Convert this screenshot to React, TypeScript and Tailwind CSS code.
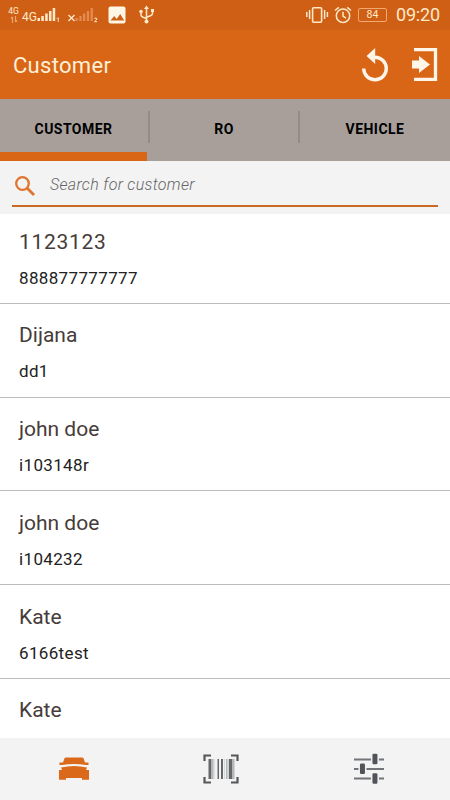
const customers = [
  { name: "1123123", code: "888877777777" },
  { name: "Dijana", code: "dd1" },
  { name: "john doe", code: "i103148r" },
  { name: "john doe", code: "i104232" },
  { name: "Kate", code: "6166test" },
  { name: "Kate", code: "" },
];

const StatusBar = () => {
  return (
    <div className="h-[30px] shrink-0 bg-[#ce5f15] flex items-center justify-between text-[#ffe9c9]">
      {/* Network */}
      <div className="flex items-center h-full pl-[7px]">
        <div className="w-[13px] flex flex-col items-center">
          <span className="text-[8.5px] leading-[9px]">4G</span>
          <svg width="8" height="8" viewBox="0 0 8 8" fill="none" stroke="#eda36c" strokeWidth="1.2">
            <path d="M2.5 7V1M1 2.5L2.5 1M5.5 0V6M7 4.5L5.5 6" />
          </svg>
        </div>
        <span className="ml-[2px] mt-[4px] w-[15px] text-[12px] leading-[12px]">4G</span>
        <svg width="24" height="16" viewBox="0 0 24 16" fill="currentColor">
          <path d="M.5 11h2.500v3H.5zM4.300 9h2.500v5H4.300zM8.200 6.500h2.500V14H8.200zM12 4h2.500v10H12zM15.700 1h2.500v13h-2.500z" />
          <path d="M19.500 11.500l1.500-1h.8V15h-1v-3.400l-1.300.7z" opacity=".9" />
        </svg>
        <svg className="ml-[5px]" width="33" height="16" viewBox="0 0 33 16">
          <path d="M2.500 8l6 6M8.500 8l-6 6" stroke="currentColor" strokeWidth="1.400" />
          <path d="M9.500 11h2.300v3H9.500zM13.300 9h2.300v5h-2.300zM17 6.500h2.300V14H17zM20.800 4h2.300v10h-2.300zM24.600 1h2.300v13h-2.300z" fill="#e58b50" />
          <path d="M28.500 12q0-1 1.200-1t1.200 1q0 .8-2.400 2.700h2.600" fill="none" stroke="currentColor" strokeWidth="1" />
        </svg>
        <svg className="ml-[9px]" width="18" height="18" viewBox="0 0 18 18">
          <rect x=".5" y=".5" width="17" height="17" rx="2" fill="#fff6e6" />
          <path d="M2.500 14.500l3.700-4.500 2.500 3 3.500-5 4 6.500z" fill="#ce5f15" />
        </svg>
        <svg className="ml-[12px]" width="18" height="20" viewBox="0 0 18 20" fill="none" stroke="currentColor" strokeWidth="1.500">
          <path d="M8.500 3v13M3 7v3q0 1.500 2 2.200l3.500 1.300M14.500 6v2.500q0 1.500-2 2.200l-4 1.500" />
          <path d="M6 4L8.500.5 11 4zM13 4h3v3h-3z" fill="currentColor" stroke="none" />
          <circle cx="3" cy="6.500" r="1.800" fill="currentColor" stroke="none" />
          <circle cx="8.500" cy="16.500" r="2" fill="currentColor" stroke="none" />
        </svg>
      </div>

      {/* Alarm, battery, clock */}
      <div className="flex items-center h-full pr-[10px]">
        <svg width="24" height="18" viewBox="0 0 24 18" fill="none" stroke="currentColor">
          <rect x="6.600" y="1.700" width="9" height="14.600" rx="1" strokeWidth="1.600" />
          <path d="M.8 6v5M3.600 4v9M18.600 4v9M21.400 6v5" strokeWidth="1.500" />
        </svg>
        <svg className="ml-[4px]" width="18" height="18" viewBox="0 0 18 18" fill="none" stroke="currentColor" strokeWidth="1.500">
          <circle cx="9" cy="9.800" r="6.700" />
          <path d="M9 5.800v4.200l3 2.200M1 4.500L4.800 1.400M17 4.500l-3.800-3.100" />
        </svg>
        <div className="ml-[6px] w-[29px] h-[14px] rounded-[2px] border border-[#f3a771] flex items-center justify-center pt-px text-[10.5px] leading-none">
          84
        </div>
        <span className="ml-[9px] w-[44px] text-[18px] leading-[20px] tracking-[-0.2px] whitespace-nowrap">09:20</span>
      </div>
    </div>
  );
};

const Header = () => {
  return (
    <div className="h-[69px] shrink-0 bg-[#d96617] flex items-center justify-between pl-[13px] pr-[12px]">
      <h1 className="mt-[2px] text-[22px] leading-[26px] tracking-[0.3px] text-[#fff0d8]">Customer</h1>
      <div className="flex items-center gap-[22px]">
        <svg width="28" height="36" viewBox="0 0 28 36">
          <path d="M2.700 21.500A11.300 11.300 0 1 0 14 10.200H12" fill="none" stroke="#fff5e8" strokeWidth="3.400" />
          <path d="M5.500 9L14.200 1V17z" fill="#fff5e8" />
        </svg>
        <svg width="27" height="36" viewBox="0 0 27 36">
          <path d="M3 2.700H24.500V32.300H3" fill="none" stroke="#fff5e8" strokeWidth="3.300" />
          <path d="M1 13.500H8V9L19 17.500 8 26V21.500H1z" fill="#fff5e8" />
        </svg>
      </div>
    </div>
  );
};

const Tabs = () => {
  return (
    <div className="h-[62px] shrink-0 bg-[#a89f9b] flex text-[14px] font-bold tracking-[0.45px] text-black">
      <div className="w-[147px] h-full pt-[7px] border-b-[9px] border-[#d96617] flex items-center justify-center">CUSTOMER</div>
      <div className="w-[2px] h-[32px] mt-[12px] ml-px bg-[#948b87]" />
      <div className="w-[148px] flex items-center justify-center pb-[2px]">RO</div>
      <div className="w-[2px] h-[32px] mt-[12px] bg-[#948b87]" />
      <div className="flex-1 flex items-center justify-center pb-[2px]">VEHICLE</div>
    </div>
  );
};

const SearchBar = () => {
  return (
    <div className="h-[53px] shrink-0 bg-[#f3f3f3] px-[12px]">
      <div className="h-[46px] border-b-2 border-[#cb6a25] flex items-center">
        <svg className="mt-[6px] ml-[2px]" width="22" height="22" viewBox="0 0 22 22" fill="none" stroke="#df752e">
          <circle cx="8.500" cy="8.500" r="6.300" strokeWidth="2.300" />
          <path d="M13 13l7 7" strokeWidth="2.800" />
        </svg>
        <span className="ml-[14px] mt-[3px] text-[16px] italic font-light tracking-[0.31px] text-[#666666]">Search for customer</span>
      </div>
    </div>
  );
};

const BottomNav = () => {
  return (
    <div className="h-[62px] shrink-0 bg-[#f3f3f3] flex">
      <div className="w-[147px] flex items-center justify-center">
        <svg width="32" height="26" viewBox="0 0 32 26" fill="#db691b">
          <path d="M8 1.500H24Q25.200 1.500 25.600 2.500L27 6.500H30.500V9H28Q16 7 4 9H1.500V6.500H5L6.400 2.500Q6.800 1.500 8 1.500z" />
          <path d="M3 11.500Q16 8.500 29 11.500L28 14H31V23.700H24V22H8V23.700H1V14H4z" />
        </svg>
      </div>
      <div className="w-[148px] flex items-center justify-center">
        <svg width="36" height="32" viewBox="0 0 36 32">
          <path d="M1.500 8V2.500H8M28 2.500H34.500V8M1.500 24V29.500H8M28 29.500H34.500V24" fill="none" stroke="#555759" strokeWidth="2.200" />
          <path d="M5.500 6h2.500v20H5.500zM14.500 6h1.500v20h-1.500zM18 6h2v20h-2zM26 6h3v20h-3z" fill="#65686a" />
          <path d="M8 6h2.500v20H8zM23 6h1.500v20H23zM29 6h2.500v20H29z" fill="#b4b6b8" />
          <path d="M10.500 6h1v20h-1zM21 6h.8v20H21zM24.500 6H26v20h-1.500z" fill="#d0d1d2" />
        </svg>
      </div>
      <div className="w-[147px] flex items-center justify-center">
        <svg width="32" height="32" viewBox="0 0 32 32">
          <path d="M1 6.500H31M1 16H31M1 25.500H31" stroke="#727477" strokeWidth="2.200" />
          <g fill="#505358" stroke="#f3f3f3" strokeWidth="1.500">
            <rect x="18.700" y="0" width="6.500" height="12" rx="2" />
            <rect x="6.200" y="9.800" width="6.500" height="12" rx="2" />
            <rect x="18.700" y="19.500" width="6.500" height="12" rx="2" />
          </g>
        </svg>
      </div>
    </div>
  );
};

const App = () => {
  return (
    <div className="w-[450px] h-[800px] overflow-hidden flex flex-col bg-white font-['Roboto',sans-serif]">
      <StatusBar />
      <Header />
      <Tabs />
      <SearchBar />

      {/* Customer list */}
      <div className="flex-1 min-h-0 overflow-hidden">
        {customers.map((customer, index) => (
          <div
            key={index}
            className={`pl-[19px] border-b border-[#bcbcbc] ${index === 0 ? "h-[89.8px] pt-[15px]" : "h-[93.75px] pt-[18.5px]"}`}
          >
            <p className={`text-[21px] leading-[26px] text-[#463c39] ${index === 0 ? "tracking-[0.7px]" : "tracking-[0px]"}`}>
              {customer.name}
            </p>
            <p className="mt-[13px] text-[17px] leading-[20px] tracking-[0.35px] text-[#222222]">{customer.code}</p>
          </div>
        ))}
      </div>

      <BottomNav />
    </div>
  );
};

export default App;
